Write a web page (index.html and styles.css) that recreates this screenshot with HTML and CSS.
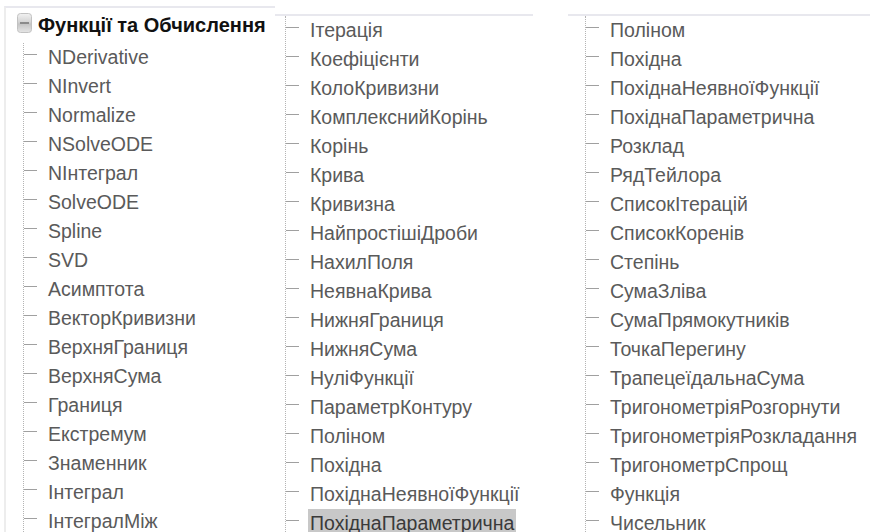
FILE: index.html
```html
<!DOCTYPE html>
<html lang="uk">
<head>
<meta charset="utf-8">
<title>Функції та Обчислення</title>
<link rel="stylesheet" href="styles.css">
</head>
<body>
<div class="board">
  <section class="panel panel-first">
    <div class="group-head">
      <svg class="toggle" width="15" height="20" viewBox="0 0 15 20" aria-hidden="true">
        <defs>
          <linearGradient id="tg" x1="0" y1="0" x2="0" y2="1">
            <stop offset="0" stop-color="#f2f2f2"/>
            <stop offset="0.45" stop-color="#d4d4d4"/>
            <stop offset="0.55" stop-color="#c4c4c4"/>
            <stop offset="1" stop-color="#e6e6e6"/>
          </linearGradient>
        </defs>
        <rect x="0.5" y="0.5" width="14" height="19" rx="3" fill="url(#tg)" stroke="#c2c2c2"/>
        <rect x="3" y="9" width="9" height="2" fill="#8a8a8a"/>
      </svg>
      <span class="group-title">Функції та Обчислення</span>
    </div>
    <ul class="tree tree-first">
      <li><span class="branch"></span><span class="label">NDerivative</span></li>
      <li><span class="branch"></span><span class="label">NInvert</span></li>
      <li><span class="branch"></span><span class="label">Normalize</span></li>
      <li><span class="branch"></span><span class="label">NSolveODE</span></li>
      <li><span class="branch"></span><span class="label">NІнтеграл</span></li>
      <li><span class="branch"></span><span class="label">SolveODE</span></li>
      <li><span class="branch"></span><span class="label">Spline</span></li>
      <li><span class="branch"></span><span class="label">SVD</span></li>
      <li><span class="branch"></span><span class="label">Асимптота</span></li>
      <li><span class="branch"></span><span class="label">ВекторКривизни</span></li>
      <li><span class="branch"></span><span class="label">ВерхняГраниця</span></li>
      <li><span class="branch"></span><span class="label">ВерхняСума</span></li>
      <li><span class="branch"></span><span class="label">Границя</span></li>
      <li><span class="branch"></span><span class="label">Екстремум</span></li>
      <li><span class="branch"></span><span class="label">Знаменник</span></li>
      <li><span class="branch"></span><span class="label">Інтеграл</span></li>
      <li><span class="branch"></span><span class="label">ІнтегралМіж</span></li>
    </ul>
  </section>

  <section class="panel panel-second">
    <ul class="tree tree-second">
      <li><span class="branch"></span><span class="label">Ітерація</span></li>
      <li><span class="branch"></span><span class="label">Коефіцієнти</span></li>
      <li><span class="branch"></span><span class="label">КолоКривизни</span></li>
      <li><span class="branch"></span><span class="label">КомплекснийКорінь</span></li>
      <li><span class="branch"></span><span class="label">Корінь</span></li>
      <li><span class="branch"></span><span class="label">Крива</span></li>
      <li><span class="branch"></span><span class="label">Кривизна</span></li>
      <li><span class="branch"></span><span class="label">НайпростішіДроби</span></li>
      <li><span class="branch"></span><span class="label">НахилПоля</span></li>
      <li><span class="branch"></span><span class="label">НеявнаКрива</span></li>
      <li><span class="branch"></span><span class="label">НижняГраниця</span></li>
      <li><span class="branch"></span><span class="label">НижняСума</span></li>
      <li><span class="branch"></span><span class="label">НуліФункції</span></li>
      <li><span class="branch"></span><span class="label">ПараметрКонтуру</span></li>
      <li><span class="branch"></span><span class="label">Поліном</span></li>
      <li><span class="branch"></span><span class="label">Похідна</span></li>
      <li><span class="branch"></span><span class="label">ПохіднаНеявноїФункції</span></li>
      <li><span class="branch"></span><span class="label selected">ПохіднаПараметрична</span></li>
    </ul>
  </section>

  <section class="panel panel-third">
    <ul class="tree tree-third">
      <li><span class="branch"></span><span class="label">Поліном</span></li>
      <li><span class="branch"></span><span class="label">Похідна</span></li>
      <li><span class="branch"></span><span class="label">ПохіднаНеявноїФункції</span></li>
      <li><span class="branch"></span><span class="label">ПохіднаПараметрична</span></li>
      <li><span class="branch"></span><span class="label">Розклад</span></li>
      <li><span class="branch"></span><span class="label">РядТейлора</span></li>
      <li><span class="branch"></span><span class="label">СписокІтерацій</span></li>
      <li><span class="branch"></span><span class="label">СписокКоренів</span></li>
      <li><span class="branch"></span><span class="label">Степінь</span></li>
      <li><span class="branch"></span><span class="label">СумаЗліва</span></li>
      <li><span class="branch"></span><span class="label">СумаПрямокутників</span></li>
      <li><span class="branch"></span><span class="label">ТочкаПерегину</span></li>
      <li><span class="branch"></span><span class="label">ТрапецеїдальнаСума</span></li>
      <li><span class="branch"></span><span class="label">ТригонометріяРозгорнути</span></li>
      <li><span class="branch"></span><span class="label">ТригонометріяРозкладання</span></li>
      <li><span class="branch"></span><span class="label">ТригонометрСпрощ</span></li>
      <li><span class="branch"></span><span class="label">Функція</span></li>
      <li><span class="branch"></span><span class="label">Чисельник</span></li>
    </ul>
  </section>
</div>
</body>
</html>
```

FILE: styles.css
```css
html, body {
  margin: 0;
  padding: 0;
  background: #ffffff;
}

body {
  width: 870px;
  height: 532px;
  overflow: hidden;
  font-family: "Liberation Sans", Arial, sans-serif;
}

.board {
  display: flex;
  align-items: flex-start;
  padding-left: 4px;
}

/* tree panels */
.panel {
  border-top: 2px solid #e8e8ee;
  box-sizing: border-box;
}

.panel-first {
  width: 271px;
  margin-top: 6px;
  border-left: 2px solid #ededed;
}

.panel-second {
  width: 258px;
  margin-top: 14px;
}

.panel-third {
  width: 302px;
  margin-top: 14px;
  margin-left: 35px;
}

/* group header with collapse toggle */
.group-head {
  display: flex;
  align-items: flex-start;
  height: 35px;
}

.toggle {
  display: block;
  margin: 5px 0 0 11px;
  flex: none;
}

.group-title {
  margin-left: 6px;
  font-size: 20px;
  font-weight: bold;
  line-height: 35px;
  color: #111111;
  white-space: nowrap;
}

/* tree rows */
.tree {
  list-style: none;
  margin: 0;
  padding: 0;
  border-left: 1px dotted #b4b4b4;
}

.tree-first { margin-left: 17px; }
.tree-second { margin-left: 10px; }
.tree-third { margin-left: 17px; }

.tree li {
  display: flex;
  align-items: flex-start;
  height: 29px;
}

.branch {
  flex: none;
  width: 13px;
  height: 1px;
  margin-top: 11px;
  background: #a0a0a0;
}

.label {
  margin-left: 11px;
  font-size: 19.5px;
  line-height: 29px;
  color: #5a5a5a;
  white-space: nowrap;
}

.label.selected {
  margin-left: 9px;
  padding: 0 2px;
  background: #c8c8c8;
  color: #3a3a3a;
}
```
